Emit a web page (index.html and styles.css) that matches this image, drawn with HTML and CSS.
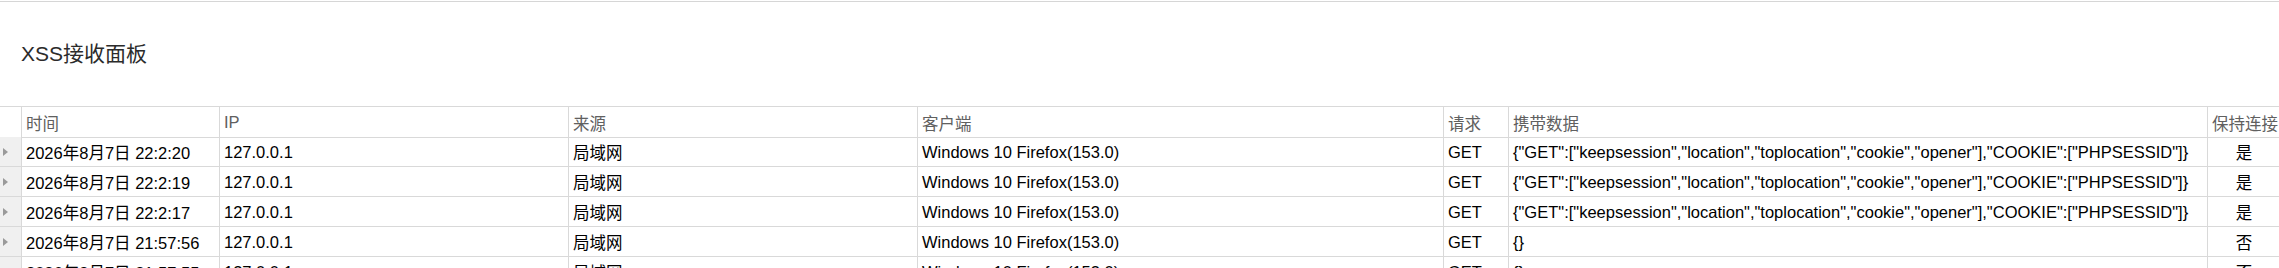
FILE: index.html
```html
<!DOCTYPE html>
<html lang="zh-CN">
<head>
<meta charset="utf-8">
<title>XSS接收面板</title>
<link rel="stylesheet" href="styles.css">
</head>
<body>
<div class="window">
  <header class="panel-head">
    <h1 class="panel-title">XSS接收面板</h1>
  </header>
  <div class="grid">
    <div class="cell corner"></div>
    <div class="cell th">时间</div>
    <div class="cell th">IP</div>
    <div class="cell th">来源</div>
    <div class="cell th">客户端</div>
    <div class="cell th">请求</div>
    <div class="cell th">携带数据</div>
    <div class="cell th last">保持连接</div>

    <div class="cell rowhead"><svg class="arrow" width="5" height="8" viewBox="0 0 5 8"><path d="M0 0 L5 4 L0 8 Z"/></svg></div>
    <div class="cell">2026年8月7日 22:2:20</div>
    <div class="cell">127.0.0.1</div>
    <div class="cell">局域网</div>
    <div class="cell">Windows 10 Firefox(153.0)</div>
    <div class="cell">GET</div>
    <div class="cell">{"GET":["keepsession","location","toplocation","cookie","opener"],"COOKIE":["PHPSESSID"]}</div>
    <div class="cell center last">是</div>

    <div class="cell rowhead"><svg class="arrow" width="5" height="8" viewBox="0 0 5 8"><path d="M0 0 L5 4 L0 8 Z"/></svg></div>
    <div class="cell">2026年8月7日 22:2:19</div>
    <div class="cell">127.0.0.1</div>
    <div class="cell">局域网</div>
    <div class="cell">Windows 10 Firefox(153.0)</div>
    <div class="cell">GET</div>
    <div class="cell">{"GET":["keepsession","location","toplocation","cookie","opener"],"COOKIE":["PHPSESSID"]}</div>
    <div class="cell center last">是</div>

    <div class="cell rowhead"><svg class="arrow" width="5" height="8" viewBox="0 0 5 8"><path d="M0 0 L5 4 L0 8 Z"/></svg></div>
    <div class="cell">2026年8月7日 22:2:17</div>
    <div class="cell">127.0.0.1</div>
    <div class="cell">局域网</div>
    <div class="cell">Windows 10 Firefox(153.0)</div>
    <div class="cell">GET</div>
    <div class="cell">{"GET":["keepsession","location","toplocation","cookie","opener"],"COOKIE":["PHPSESSID"]}</div>
    <div class="cell center last">是</div>

    <div class="cell rowhead"><svg class="arrow" width="5" height="8" viewBox="0 0 5 8"><path d="M0 0 L5 4 L0 8 Z"/></svg></div>
    <div class="cell">2026年8月7日 21:57:56</div>
    <div class="cell">127.0.0.1</div>
    <div class="cell">局域网</div>
    <div class="cell">Windows 10 Firefox(153.0)</div>
    <div class="cell">GET</div>
    <div class="cell">{}</div>
    <div class="cell center last">否</div>

    <div class="cell rowhead"><svg class="arrow" width="5" height="8" viewBox="0 0 5 8"><path d="M0 0 L5 4 L0 8 Z"/></svg></div>
    <div class="cell">2026年8月7日 21:57:55</div>
    <div class="cell">127.0.0.1</div>
    <div class="cell">局域网</div>
    <div class="cell">Windows 10 Firefox(153.0)</div>
    <div class="cell">GET</div>
    <div class="cell">{}</div>
    <div class="cell center last">否</div>
  </div>
</div>
</body>
</html>
```
FILE: styles.css
```css
html, body {
  margin: 0;
  padding: 0;
  background: #ffffff;
  overflow: hidden;
}
body {
  padding-top: 1px;
  font-family: "Liberation Sans", "Noto Sans CJK SC", sans-serif;
  color: #000;
}
.window {
  border-top: 1px solid #d6d6d6;
  width: 2280px;
}
.panel-head {
  height: 104px;
  box-sizing: border-box;
  padding: 37px 0 0 21px;
}
.panel-title {
  margin: 0;
  font-size: 21px;
  font-weight: normal;
  line-height: 30px;
  color: #2b2b2b;
}
.grid {
  display: grid;
  grid-template-columns: 22px 198px 349px 349px 526px 65px 699px 72px;
  grid-auto-rows: 30px;
  border-top: 1px solid #d9d9d9;
  font-size: 16.5px;
}
.cell {
  box-sizing: border-box;
  border-right: 1px solid #d9d9d9;
  border-bottom: 1px solid #d9d9d9;
  padding: 1px 0 0 4px;
  display: flex;
  align-items: center;
  white-space: nowrap;
  overflow: hidden;
}
.cell.last { border-right: none; }
.th {
  color: #606060;
  height: 31px;
}
.corner { height: 31px; }
.rowhead {
  background: #f0f0f0;
  padding-left: 3px;
}
.arrow { fill: #9a9a9a; }
.center {
  justify-content: center;
  padding-left: 0;
}
```
